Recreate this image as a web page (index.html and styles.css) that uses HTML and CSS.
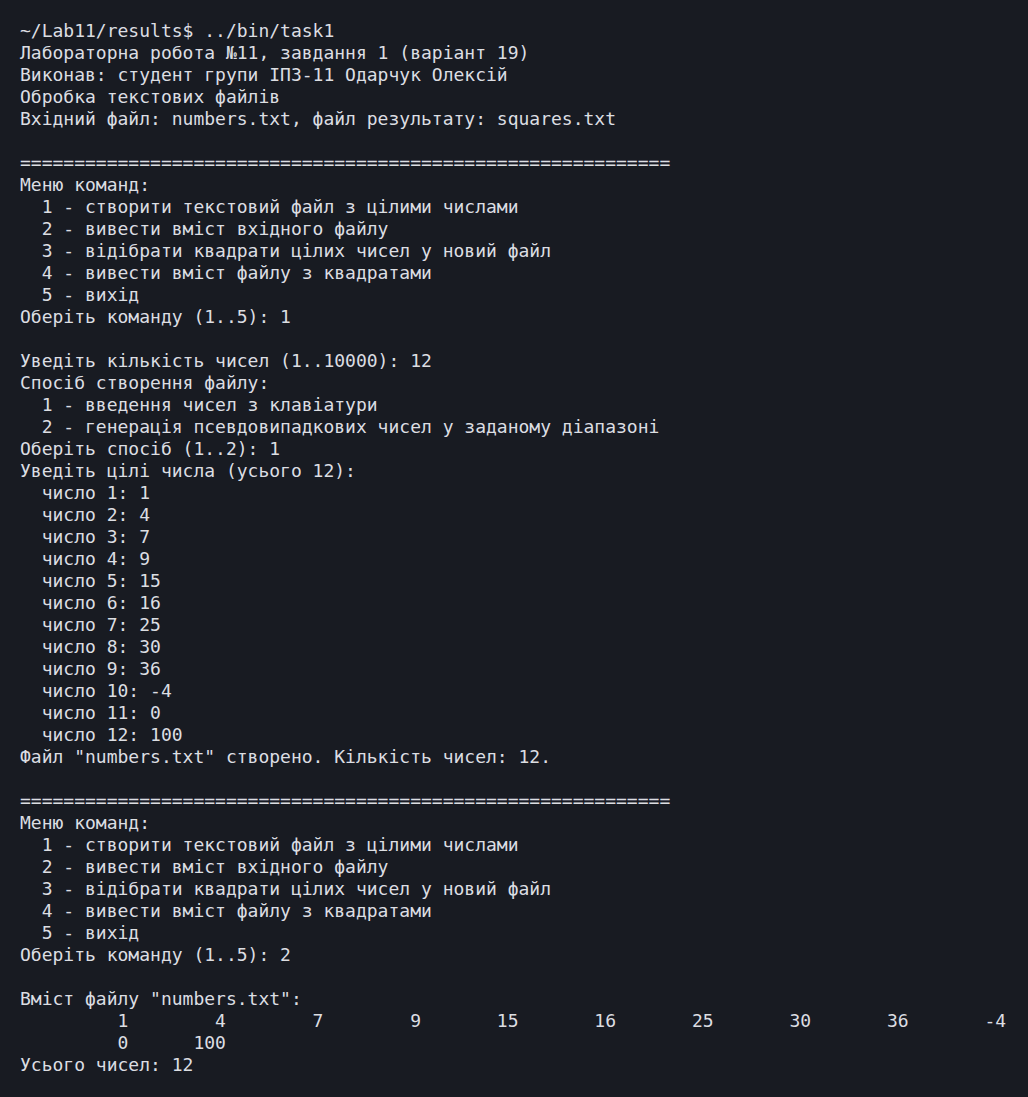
FILE: index.html
```html
<!DOCTYPE html>
<html lang="uk">
<head>
<meta charset="utf-8">
<title>task1</title>
<link rel="stylesheet" href="styles.css">
</head>
<body>
<pre class="term">~/Lab11/results$ ../bin/task1
Лабораторна робота №11, завдання 1 (варіант 19)
Виконав: студент групи ІП3-11 Одарчук Олексій
Обробка текстових файлів
Вхідний файл: numbers.txt, файл результату: squares.txt

============================================================
Меню команд:
  1 - створити текстовий файл з цілими числами
  2 - вивести вміст вхідного файлу
  3 - відібрати квадрати цілих чисел у новий файл
  4 - вивести вміст файлу з квадратами
  5 - вихід
Оберіть команду (1..5): 1

Уведіть кількість чисел (1..10000): 12
Спосіб створення файлу:
  1 - введення чисел з клавіатури
  2 - генерація псевдовипадкових чисел у заданому діапазоні
Оберіть спосіб (1..2): 1
Уведіть цілі числа (усього 12):
  число 1: 1
  число 2: 4
  число 3: 7
  число 4: 9
  число 5: 15
  число 6: 16
  число 7: 25
  число 8: 30
  число 9: 36
  число 10: -4
  число 11: 0
  число 12: 100
Файл "numbers.txt" створено. Кількість чисел: 12.

============================================================
Меню команд:
  1 - створити текстовий файл з цілими числами
  2 - вивести вміст вхідного файлу
  3 - відібрати квадрати цілих чисел у новий файл
  4 - вивести вміст файлу з квадратами
  5 - вихід
Оберіть команду (1..5): 2

Вміст файлу "numbers.txt":
         1        4        7        9       15       16       25       30       36       -4
         0      100
Усього чисел: 12</pre>
</body>
</html>
```
FILE: styles.css
```css
html, body {
  margin: 0;
  padding: 0;
  background: #181b22;
}
body {
  min-height: 1097px;
}
.term {
  margin: 0;
  padding: 20px 20px 0 20px;
  font-family: "DejaVu Sans Mono", monospace;
  font-size: 18px;
  line-height: 22px;
  color: #dcdee2;
  white-space: pre;
}
```
